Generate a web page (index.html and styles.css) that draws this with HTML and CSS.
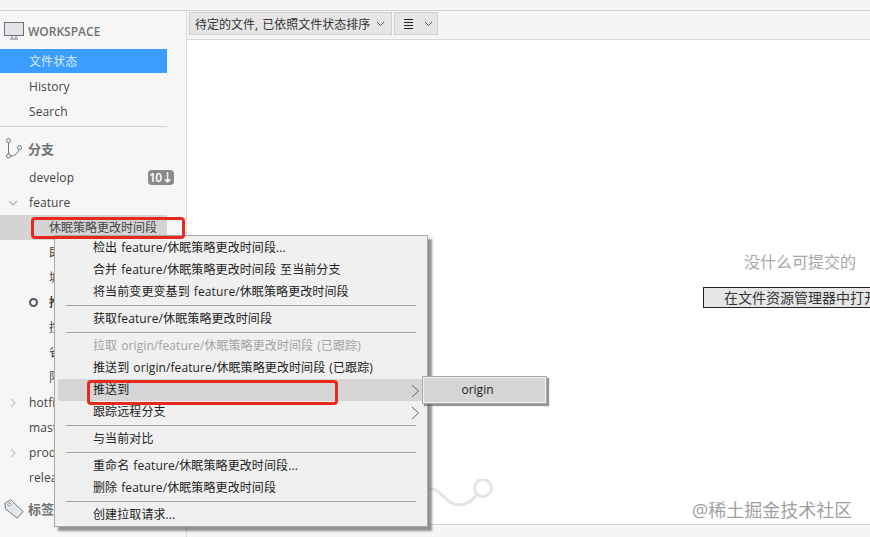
FILE: index.html
```html
<!DOCTYPE html>
<html lang="zh">
<head>
<meta charset="utf-8">
<title>Sourcetree</title>
<link rel="stylesheet" href="styles.css">
</head>
<body>
<div class="app">
  <div class="menubar">
    <span class="m m1">文件</span><span class="m m2">编辑</span><span class="m m3">视图</span><span class="m m4">仓库</span><span class="m m5">操作</span><span class="m m6">拉取</span><span class="m m7 dim">推送</span><span class="m m8 dim">工具</span><span class="m m9">帮助</span>
  </div>
  <div class="content">
    <aside class="sidebar">
      <div class="head head-ws">
        <svg class="ic" width="20" height="19" viewBox="0 0 20 19"><rect x="0.500" y="0.500" width="19" height="13" fill="#e2e4e8" stroke="#6d7278"/><path d="M8 14v2M12 14v2M6 17h8" stroke="#6d7278" fill="none"/></svg>
        <span>WORKSPACE</span>
      </div>
      <div class="row sel">文件状态</div>
      <div class="row">History</div>
      <div class="row">Search</div>
      <div class="rule"></div>
      <div class="head head-br">
        <svg class="ic" width="18" height="21" viewBox="0 0 18 21"><g fill="none" stroke="#6d7278"><circle cx="2.500" cy="2.500" r="2"/><circle cx="2.500" cy="18" r="2"/><circle cx="13.500" cy="9.500" r="2"/><path d="M2.500 4.500V16M4.500 18c4 0 8-3 8.500-6.700"/></g></svg>
        <span>分支</span>
      </div>
      <div class="row between">develop<span class="badge">10↓</span></div>
      <div class="row"><svg class="chev" width="10" height="10" viewBox="0 0 10 10"><path d="M1 3l4 4 4-4" fill="none" stroke="#b4b4b4" stroke-width="1.300"/></svg>feature</div>
      <div class="row sub cur">休眠策略更改时间段</div>
      <div class="row sub">即</div>
      <div class="row sub">城</div>
      <div class="row sub active"><i class="dot"></i>推</div>
      <div class="row sub">控</div>
      <div class="row sub">省</div>
      <div class="row sub">限</div>
      <div class="row"><svg class="chev" width="10" height="10" viewBox="0 0 10 10"><path d="M3 1l4 4-4 4" fill="none" stroke="#c8c8c8" stroke-width="1.300"/></svg>hotfix</div>
      <div class="row">master</div>
      <div class="row"><svg class="chev" width="10" height="10" viewBox="0 0 10 10"><path d="M3 1l4 4-4 4" fill="none" stroke="#c8c8c8" stroke-width="1.300"/></svg>prod</div>
      <div class="row">release</div>
      <div class="head head-tag">
        <svg class="ic" width="20" height="20" viewBox="0 0 24 24"><path d="M1 5l7-4 15 14-7 8L2 12z" fill="#e4e7ec" stroke="#777c82" stroke-width="1.200"/><circle cx="6.500" cy="6.500" r="1.800" fill="#fff" stroke="#777c82"/></svg>
        <span>标签</span>
      </div>
    </aside>
    <main class="main">
      <div class="toolbar">
        <button class="tb tb-sort">待定的文件, 已依照文件状态排序<svg width="9" height="6" viewBox="0 0 9 6"><path d="M1 1l3.500 3.500L8 1" fill="none" stroke="#555"/></svg></button>
        <button class="tb tb-list"><svg width="11" height="11" viewBox="0 0 11 11"><path d="M1 1.500h9M1 4.500h9M1 7.500h9M1 10.500h9" stroke="#222"/></svg><svg width="9" height="6" viewBox="0 0 9 6"><path d="M1 1l3.500 3.500L8 1" fill="none" stroke="#555"/></svg></button>
      </div>
      <div class="pane">
        <div class="empty">
          <p>没什么可提交的</p>
          <button class="open">在文件资源管理器中打开</button>
        </div>
        <svg class="deco" width="70" height="30" viewBox="0 0 70 30"><path d="M0 10C12 8 16 26 30 26C38 26 43 21 48 16" fill="none" stroke="#e2e4e6" stroke-width="3"/><circle cx="54" cy="9" r="8.500" fill="#fff" stroke="#e2e4e6" stroke-width="3"/></svg>
        <div class="mark">@稀土掘金技术社区</div>
      </div>
      <div class="statusbar"></div>
    </main>
  </div>
</div>

<div class="menu">
  <div class="mi">检出 feature/休眠策略更改时间段...</div>
  <div class="mi">合并 feature/休眠策略更改时间段 至当前分支</div>
  <div class="mi">将当前变更变基到 feature/休眠策略更改时间段</div>
  <div class="sep"></div>
  <div class="mi">获取feature/休眠策略更改时间段</div>
  <div class="sep"></div>
  <div class="mi off">拉取 origin/feature/休眠策略更改时间段 (已跟踪)</div>
  <div class="mi">推送到 origin/feature/休眠策略更改时间段 (已跟踪)</div>
  <div class="mi hot">推送到<svg class="arr" width="9" height="14" viewBox="0 0 9 14"><path d="M1 1l6.500 6L1 13" fill="none" stroke="#666"/></svg></div>
  <div class="mi">跟踪远程分支<svg class="arr" width="9" height="14" viewBox="0 0 9 14"><path d="M1 1l6.500 6L1 13" fill="none" stroke="#666"/></svg></div>
  <div class="sep"></div>
  <div class="mi">与当前对比</div>
  <div class="sep"></div>
  <div class="mi">重命名 feature/休眠策略更改时间段...</div>
  <div class="mi">删除 feature/休眠策略更改时间段</div>
  <div class="sep"></div>
  <div class="mi">创建拉取请求...</div>
</div>
<div class="submenu"><div class="si">origin</div></div>
<div class="mark-box box-a"></div>
<div class="mark-box box-b"></div>
</body>
</html>
```
FILE: styles.css
```css
* { box-sizing: border-box; }
html, body { margin: 0; height: 100%; overflow: hidden; }
body { font-family: "Open Sans", "Noto Sans CJK SC", sans-serif; font-size: 12px; color: #333; background: #f5f5f5; }
.app { width: 870px; height: 537px; display: flex; flex-direction: column; }
.menubar { height: 11px; border-bottom: 1px solid #d4d4d4; position: relative; overflow: hidden; flex: none; }
.m { position: absolute; top: -14px; font-size: 12px; line-height: 16px; color: #222; }
.m.dim { color: #777; }
.m1 { left: 0; } .m2 { left: 73px; } .m3 { left: 128px; } .m4 { left: 184px; } .m5 { left: 262px; } .m6 { left: 318px; } .m7 { left: 398px; } .m8 { left: 478px; } .m9 { left: 533px; }
.content { flex: 1; display: flex; min-height: 0; }
.sidebar { width: 187px; flex: none; background: #f6f6f6; border-right: 1px solid #d9d9d9; padding-right: 19px; overflow: hidden; }
.head { display: flex; align-items: center; font-weight: 600; color: #6e7175; font-size: 13px; }
.head .ic { flex: none; }
.head-ws { height: 27px; padding-left: 4px; margin-top: 7px; gap: 4px; font-size: 12px; }
.head-br { height: 25px; padding-left: 6px; margin-top: 9px; margin-bottom: 4px; gap: 4px; }
.head-tag { height: 25px; padding-left: 4px; gap: 4px; margin-top: 6px; }
.row { height: 25px; line-height: 25px; padding-left: 29px; position: relative; white-space: nowrap; color: #444; letter-spacing: 0.1px; }
.row.sel { height: 24px; line-height: 26px; margin-top: 4px; margin-bottom: 1px; background: #3b9dff; color: #dcecff; }
.rule { height: 1px; background: #d4d4d4; margin-top: 2px; }
.between { display: flex; justify-content: space-between; margin-right: -7px; padding-right: 0; }
.badge { align-self: center; width: 26px; height: 15px; line-height: 15px; text-align: center; background: #8a8a8a; color: #fff; border-radius: 4px; font-weight: 600; font-size: 12px; letter-spacing: -0.6px; overflow: hidden; }
.chev { position: absolute; left: 8px; top: 8px; }
.sub { padding-left: 49px; letter-spacing: 0; }
.cur { background: #d4d4d4; }
.dot { position: absolute; left: 29px; top: 8px; width: 9px; height: 9px; border: 2px solid #4a5a6a; border-radius: 50%; }
.active { font-weight: 700; }
.main { flex: 1; min-width: 0; display: flex; flex-direction: column; background: #fff; }
.toolbar { height: 29px; flex: none; background: #f5f5f5; border-bottom: 1px solid #d9d9d9; display: flex; align-items: center; gap: 2px; padding: 0 0 3px 2px; }
.tb { height: 23px; display: flex; align-items: center; background: #e6e6e6; border: 1px solid #cfcfcf; font: inherit; color: #333; padding: 0; }
.tb-sort { width: 203px; padding-left: 5px; gap: 6px; white-space: nowrap; word-spacing: 1px; }
.tb-list { width: 44px; padding-left: 8px; gap: 10px; }
.pane { flex: 1; position: relative; overflow: hidden; }
.empty { position: absolute; top: 210px; left: 516px; width: 400px; }
.empty p { margin: 0 0 13px 41px; font-size: 16px; line-height: 24px; color: #a8a8a8; }
.open { display: block; width: 240px; height: 21px; background: #e6e6e6; border: 1px solid #222; font: inherit; font-size: 14px; line-height: 18px; color: #333; padding: 0 0 0 20px; text-align: left; white-space: nowrap; }
.deco { position: absolute; left: 242px; top: 439px; }
.mark { position: absolute; left: 505px; top: 458px; font-size: 18px; line-height: 24px; color: #a0a0a0; white-space: nowrap; }
.statusbar { height: 13px; flex: none; background: #f5f5f5; border-top: 1px solid #d4d4d4; }
.menu { position: absolute; left: 54px; top: 235px; width: 374px; height: 292px; background: #f0f0f0; border: 1px solid #a8a8a8; box-shadow: 4px 4px 2px rgba(90,90,90,.65); padding-top: 1px; }
.mi { height: 22px; line-height: 22px; padding-left: 38px; position: relative; color: #222; white-space: nowrap; word-spacing: 0.8px; letter-spacing: 0.1px; }
.off { color: #a2a2a2; }
.hot { background: #d5d5d5; margin-left: 3px; padding-left: 35px; border-radius: 2px; }
.arr { position: absolute; right: 7px; top: 5px; }
.sep { height: 1px; background: #a6a6a6; margin: 2px 11px 2px 11px; }
.submenu { position: absolute; left: 422px; top: 376px; width: 125px; height: 28px; background: #f0f0f0; border: 1px solid #a8a8a8; box-shadow: 2px 2px 1px rgba(90,90,90,.65); padding: 1px; }
.si { height: 24px; line-height: 24px; background: #d5d5d5; text-align: center; color: #222; padding-right: 14px; }
.mark-box { position: absolute; border: 3px solid #e6281e; border-radius: 4px; }
.box-a { left: 31px; top: 217px; width: 154px; height: 22px; }
.box-b { left: 87px; top: 380px; width: 251px; height: 25px; }
```
